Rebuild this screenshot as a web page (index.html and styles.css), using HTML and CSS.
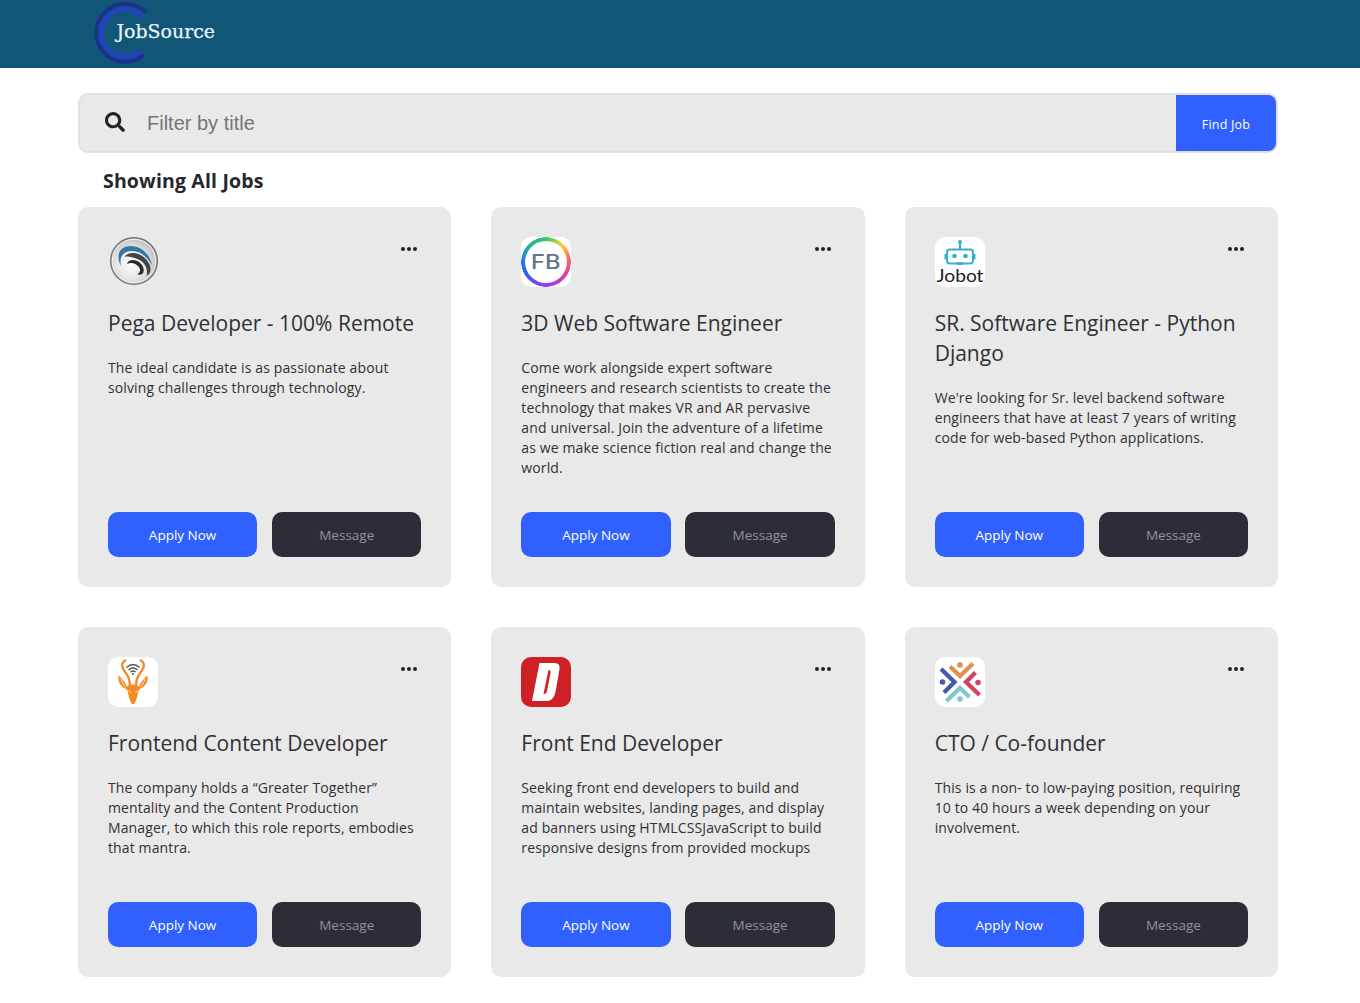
FILE: index.html
```html
<!DOCTYPE html>
<html lang="en">
<head>
<meta charset="utf-8">
<title>JobSource</title>
<link rel="stylesheet" href="styles.css">
</head>
<body>
<header class="topbar">
  <svg class="brand" width="130" height="68" viewBox="90 0 130 68" role="img" aria-label="JobSource">
    <path d="M147 12.500A29 29 0 1 0 145 55" fill="none" stroke="#1c318f" stroke-width="4"/>
    <path d="M143 17A23.500 23.500 0 1 0 141 51" fill="none" stroke="#2143c3" stroke-width="4.500"/>
    <text class="brand-text" x="117.500" y="38" textLength="98.500" lengthAdjust="spacingAndGlyphs">JobSource</text>
  </svg>
</header>
<main class="page">
  <form class="search">
    <svg class="search-icon" width="20" height="20" viewBox="0 0 512 512"><path fill="#24232a" d="M505 442.700 405.300 343c-4.500-4.500-10.600-7-17-7H372c27.600-35.300 44-79.700 44-128C416 93.100 322.900 0 208 0S0 93.100 0 208s93.100 208 208 208c48.300 0 92.700-16.400 128-44v16.300c0 6.400 2.500 12.500 7 17l99.700 99.700c9.400 9.400 24.600 9.400 33.900 0l28.300-28.300c9.400-9.400 9.400-24.600.1-34zM208 336c-70.700 0-128-57.200-128-128 0-70.700 57.200-128 128-128 70.700 0 128 57.200 128 128 0 70.700-57.200 128-128 128z"/></svg>
    <input class="search-input" type="text" placeholder="Filter by title">
    <button class="search-button" type="button">Find Job</button>
  </form>
  <h1 class="heading">Showing All Jobs</h1>
  <section class="jobs">
    <article class="card">
      <div class="card-top">
        <svg class="logo" viewBox="0 0 50 50">
          <defs><radialGradient id="metal" cx=".45" cy=".55" r=".6"><stop offset="0" stop-color="#fff"/><stop offset=".55" stop-color="#e6e6e6"/><stop offset="1" stop-color="#b4b4b4"/></radialGradient></defs>
          <circle cx="26" cy="24" r="23.300" fill="url(#metal)" stroke="#77797b" stroke-width="1.500"/>
          <circle cx="26" cy="24" r="21.700" fill="none" stroke="#f2f2f2" stroke-width="1"/>
          <path d="M13 29C8 20 10 9 23 9c11 0 19 9 21 19-6-9-12-14-20-14-9 0-13 6-11 15z" fill="#327aa5"/>
          <path d="M16.500 20c2-4 9-5 14-3 7 3 12 9 12 15 0 3-1 5-4 7 2-8-2-14-9-17-5-2-10-3-13-2z" fill="#424347"/>
          <path d="M19 27c1-5 8-5 12-2s6 8 4 11c-1 2-4 2-6 1 4-1 4-5 1-8s-7-4-11-2z" fill="#29292c"/>
        </svg>
        <svg class="dots" viewBox="0 0 18 6"><circle cx="3" cy="3" r="2"/><circle cx="9" cy="3" r="2"/><circle cx="15" cy="3" r="2"/></svg>
      </div>
      <h2 class="title">Pega Developer - 100% Remote</h2>
      <p class="desc">The ideal candidate is as passionate about<br>solving challenges through technology.</p>
      <div class="actions"><button class="btn apply">Apply Now</button><button class="btn message">Message</button></div>
    </article>
    <article class="card">
      <div class="card-top">
        <div class="logo fb"><span class="fb-inner"><svg width="42" height="42" viewBox="0 0 42 42"><text class="fb-text" x="6" y="27.800" textLength="29.500" lengthAdjust="spacingAndGlyphs">FB</text></svg></span></div>
        <svg class="dots" viewBox="0 0 18 6"><circle cx="3" cy="3" r="2"/><circle cx="9" cy="3" r="2"/><circle cx="15" cy="3" r="2"/></svg>
      </div>
      <h2 class="title">3D Web Software Engineer</h2>
      <p class="desc">Come work alongside expert software<br>engineers and research scientists to create the<br>technology that makes VR and AR pervasive<br>and universal. Join the adventure of a lifetime<br>as we make science fiction real and change the<br>world.</p>
      <div class="actions"><button class="btn apply">Apply Now</button><button class="btn message">Message</button></div>
    </article>
    <article class="card">
      <div class="card-top">
        <svg class="logo white" viewBox="0 0 50 50">
          <g fill="none" stroke="#35add4" stroke-width="2"><rect x="12" y="12.500" width="26" height="14" rx="3"/><path d="M25 6v6M10.500 17v5.500M39.500 17v5.500"/><path d="M22 26.500h6" stroke-width="2.500"/></g>
          <g fill="#35add4"><circle cx="25" cy="5" r="2"/><circle cx="19.500" cy="19" r="2.300"/><circle cx="30.500" cy="19" r="2.300"/></g>
          <text class="jobot-text" x="1.500" y="44.500" textLength="47" lengthAdjust="spacingAndGlyphs">Jobot</text>
        </svg>
        <svg class="dots" viewBox="0 0 18 6"><circle cx="3" cy="3" r="2"/><circle cx="9" cy="3" r="2"/><circle cx="15" cy="3" r="2"/></svg>
      </div>
      <h2 class="title">SR. Software Engineer - Python<br>Django</h2>
      <p class="desc">We're looking for Sr. level backend software<br>engineers that have at least 7 years of writing<br>code for web-based Python applications.</p>
      <div class="actions"><button class="btn apply">Apply Now</button><button class="btn message">Message</button></div>
    </article>
    <article class="card">
      <div class="card-top">
        <svg class="logo white" viewBox="0 0 50 50">
          <g fill="none" stroke="#f18a26" stroke-width="2.300"><path d="M18 3C11 7 15 12 18.500 17c3 4 3.500 8 3.500 13"/><path d="M32 3c7 4 3 9-.5 14-3 4-3.500 8-3.500 13"/></g>
          <path fill="#f48a20" d="M10.500 18.500c4 3 7 7 8.500 11l3-2h6l3 2c1.500-4 4.500-8 8.500-11 1 6-2 11-7 13l-2 2-1.500 7-1.500 4-1.500 2.500h-2l-1.500-2.500-1.500-4-1.500-7-2-2C12.500 29.500 9.500 24.500 10.500 18.500z"/>
          <path fill="none" stroke="#fff" stroke-width=".8" d="M13 22c1 4 3 6 5 8M37 22c-1 4-3 6-5 8M20.500 34l2.500 1.500M29.500 34l-2.500 1.500"/>
          <g fill="none" stroke="#55585d" stroke-width="1.500"><path d="M18.500 10.500q6.500-6 13 0M20.500 13q4.500-4 9 0M22.500 15q2.500-2 5 0"/></g><circle cx="25" cy="17" r="1" fill="#55585d"/>
        </svg>
        <svg class="dots" viewBox="0 0 18 6"><circle cx="3" cy="3" r="2"/><circle cx="9" cy="3" r="2"/><circle cx="15" cy="3" r="2"/></svg>
      </div>
      <h2 class="title">Frontend Content Developer</h2>
      <p class="desc">The company holds a “Greater Together”<br>mentality and the Content Production<br>Manager, to which this role reports, embodies<br>that mantra.</p>
      <div class="actions"><button class="btn apply">Apply Now</button><button class="btn message">Message</button></div>
    </article>
    <article class="card">
      <div class="card-top">
        <svg class="logo red" viewBox="0 0 50 50"><path fill="#fff" fill-rule="evenodd" d="M18.500 6h15q6 0 5 6l-4 23q-2 9-9 9H11zM27.500 13l-5 24q3 0 3.500-3L29.500 16q.5-3-2-3z"/></svg>
        <svg class="dots" viewBox="0 0 18 6"><circle cx="3" cy="3" r="2"/><circle cx="9" cy="3" r="2"/><circle cx="15" cy="3" r="2"/></svg>
      </div>
      <h2 class="title">Front End Developer</h2>
      <p class="desc">Seeking front end developers to build and<br>maintain websites, landing pages, and display<br>ad banners using HTMLCSSJavaScript to build<br>responsive designs from provided mockups</p>
      <div class="actions"><button class="btn apply">Apply Now</button><button class="btn message">Message</button></div>
    </article>
    <article class="card">
      <div class="card-top">
        <svg class="logo white" viewBox="0 0 50 50">
          <g fill="none" stroke-width="4.300"><path stroke="#e1914f" d="M15 9.500L25 19 38 6.500"/><path stroke="#435ba8" d="M6 12l13.500 13L9 35.500"/><path stroke="#d14461" d="M40.500 15.500L31 25l13.500 13"/><path stroke="#82c7cd" d="M11.500 44L25 31l9.500 9"/></g>
          <circle cx="25" cy="8" r="2.800" fill="#e1914f"/><circle cx="7.500" cy="25" r="2.800" fill="#435ba8"/><circle cx="43" cy="25.500" r="2.800" fill="#d14461"/><circle cx="25" cy="42" r="2.800" fill="#82c7cd"/>
        </svg>
        <svg class="dots" viewBox="0 0 18 6"><circle cx="3" cy="3" r="2"/><circle cx="9" cy="3" r="2"/><circle cx="15" cy="3" r="2"/></svg>
      </div>
      <h2 class="title">CTO / Co-founder</h2>
      <p class="desc">This is a non- to low-paying position, requiring<br>10 to 40 hours a week depending on your<br>involvement.</p>
      <div class="actions"><button class="btn apply">Apply Now</button><button class="btn message">Message</button></div>
    </article>
  </section>
</main>
</body>
</html>
```
FILE: styles.css
```css
* { box-sizing: border-box; }
body { margin: 0; background: #fff; color: #303035; font-family: "Open Sans", "Noto Sans", sans-serif; }
.topbar { height: 68px; padding-left: 89px; background: #115577; }
.brand { display: block; }
.brand-text { fill: #e8f4fa; stroke: #e8f4fa; stroke-width: .25px; font: 18.500px "DejaVu Serif", serif; }
.page { width: 1200px; margin-left: 78px; padding-top: 25px; }
.search { display: flex; align-items: center; height: 60px; padding-left: 25px; background: #e9e9e9; border: 2px solid #e0e1e4; border-radius: 10px; }
.search-icon { flex: none; margin-bottom: 2px; }
.search-input { flex: 1; min-width: 0; height: 56px; margin-left: 22px; padding: 0; border: 0; background: transparent; font: 20px "Liberation Sans", Arial, sans-serif; }
.search-input::placeholder { color: #757575; }
.search-button { width: 100px; height: 56px; padding: 2px 0 0; border: 0; border-radius: 0 8px 8px 0; background: #3061ff; color: #fff; font: 12.500px "Open Sans", sans-serif; letter-spacing: .2px; }
.heading { margin: 13px 0 11px 25px; color: #27262c; font-size: 19.500px; line-height: 30px; font-weight: 700; letter-spacing: .15px; white-space: nowrap; }
.jobs { display: grid; grid-template-columns: repeat(3, 1fr); grid-template-rows: 380px 350px; gap: 40px; }
.card { display: flex; flex-direction: column; min-width: 0; padding: 30px; border-radius: 10px; background: #e9e9e9; }
.card-top { display: flex; justify-content: space-between; height: 50px; }
.logo { width: 50px; height: 50px; border-radius: 10px; overflow: hidden; }
.white { background: #fff; }
.red { background: #ce2027; }
.fb { background: radial-gradient(circle closest-side, transparent 24.500px, #fff 25px), conic-gradient(from 0deg, #35c86d, #ffd238 12%, #fb755f 21%, #e84099 32%, #a23cee 47%, #8843f1 55%, #2767ec 68%, #2379e5 75%, #22ae9b 86%, #35c86d); display: grid; place-items: center; }
.fb-inner { width: 42px; height: 42px; border-radius: 50%; background: #fff; display: grid; place-items: center; }
.fb-text { font: 500 19.500px Inter, sans-serif; fill: #627487; }
.jobot-text { font: 18px Lato, sans-serif; fill: #222; }
.dots { width: 18px; height: 6px; margin: 9px 3px 0 0; fill: #222127; }
.title { margin: 21px 0 20px; font-size: 21px; line-height: 30px; font-weight: 400; white-space: nowrap; }
.desc { margin: 0; font-size: 14px; line-height: 20px; letter-spacing: .12px; white-space: nowrap; }
.actions { display: grid; grid-template-columns: 1fr 1fr; gap: 14.950px; margin-top: auto; }
.btn { height: 45px; padding: 1px 0 0; border: 0; border-radius: 10px; font: 13.500px "Open Sans", sans-serif; }
.apply { background: #3061ff; color: #fff; }
.message { background: #2d2d38; color: #92929a; }
```
